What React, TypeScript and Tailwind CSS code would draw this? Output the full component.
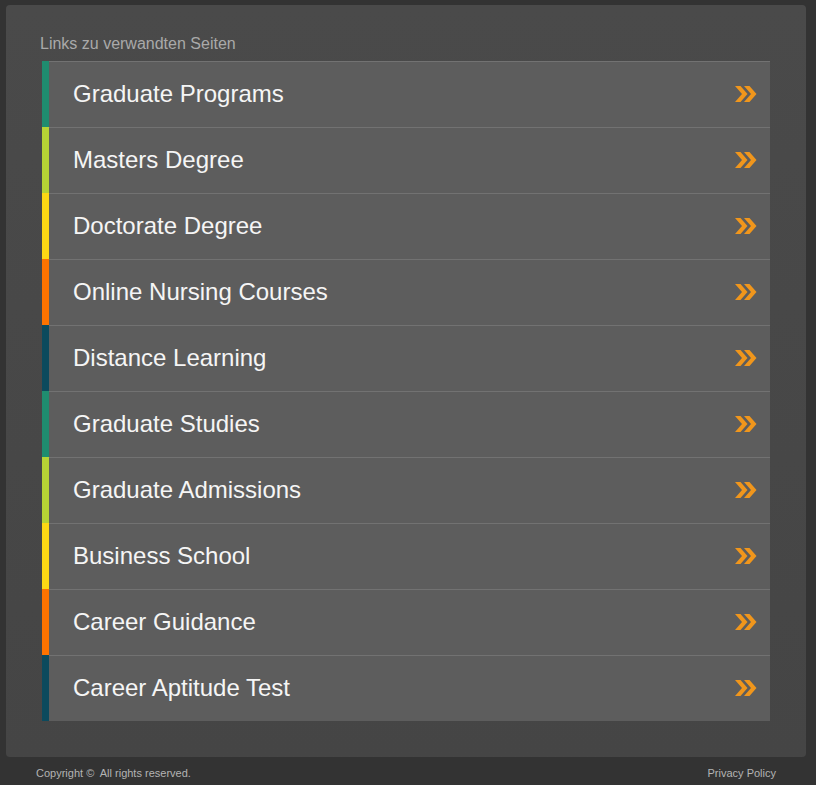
import React from "react";

const links = [
    {label: "Graduate Programs", color: "bg-[#1f8c6f]"},
    {label: "Masters Degree", color: "bg-[#b6d335]"},
    {label: "Doctorate Degree", color: "bg-[#fdd814]"},
    {label: "Online Nursing Courses", color: "bg-[#fd7300]"},
    {label: "Distance Learning", color: "bg-[#0c4a5d]"},
    {label: "Graduate Studies", color: "bg-[#1f8c6f]"},
    {label: "Graduate Admissions", color: "bg-[#b6d335]"},
    {label: "Business School", color: "bg-[#fdd814]"},
    {label: "Career Guidance", color: "bg-[#fd7300]"},
    {label: "Career Aptitude Test", color: "bg-[#0c4a5d]"},
];

// double chevron, orange
const Arrows = () => (
    <svg width="24" height="18" viewBox="0 0 24 18" className="shrink-0">
        <path d="M1 1h5.5l7 8-7 8H1l7-8z" fill="#f0961c"/>
        <path d="M10 1h5.5l7 8-7 8H10l7-8z" fill="#f0961c"/>
    </svg>
);

const App = () => {
    return (
        <div className="min-h-[785px] bg-[#333333] pt-[5px] px-[6px] font-['Liberation_Sans',Arial,sans-serif]">
            <div className="w-[800px]">
                <div className="rounded-[4px] bg-gradient-to-b from-[#4a4a4a] to-[#454545] px-[36px] pt-[30px] pb-[36px]">
                    <p className="text-[16px] leading-[18px] text-[#a9a9a9] -ml-[2px] mb-[8px]">Links zu verwandten Seiten</p>
                    <ul>
                        {links.map((link) => (
                            <li key={link.label} className="flex h-[66px]">
                                <div className={`w-[7px] ${link.color}`}/>
                                <a
                                    href="#"
                                    className="flex flex-1 items-center justify-between border-t border-[#727272] bg-[#5d5d5d] pl-[24px] pr-[12px] pb-[1px]"
                                >
                                    <span className="text-[24px] text-[#f5f5f5]">{link.label}</span>
                                    <Arrows/>
                                </a>
                            </li>
                        ))}
                    </ul>
                </div>
                <div className="flex justify-between px-[30px] pt-[8px] text-[11px] text-[#b4b4b4]">
                    <span>Copyright ©&nbsp; All rights reserved.</span>
                    <span>Privacy Policy</span>
                </div>
            </div>
        </div>
    );
};

export default App;
